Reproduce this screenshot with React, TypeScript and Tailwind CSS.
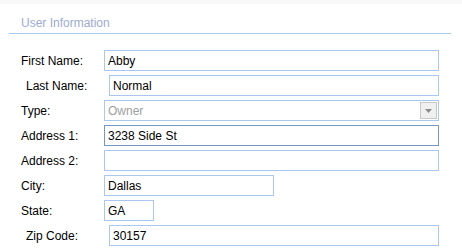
import React from 'react';

// ── Types ──────────────────────────────────────────────────────────────────
interface FieldProps {
  label: string;
  value?: string;
  width: string;      // classe de largeur du champ
  indent?: boolean;   // décalage de 5px (Last Name, Zip Code)
  focused?: boolean;
}

const Field: React.FC<FieldProps> = ({ label, value = '', width, indent = false, focused = false }) => (
  <div className={`flex items-center h-[21px] ${indent ? 'pl-[5px]' : ''}`}>
    <label className="w-[83px] shrink-0 text-[12px] text-black">{label}</label>
    <div
      className={`${width} h-[21px] border ${
        focused ? 'border-[#7597c4]' : 'border-[#aac8ef]'
      } bg-white flex items-center pl-[3px] text-[12px] text-black`}
    >
      {value}
    </div>
  </div>
);

// ── App : formulaire d'informations utilisateur ────────────────────────────
export default function App() {
  return (
    <div
      className="w-[462px] h-[249px] bg-white overflow-hidden"
      style={{ fontFamily: '"Liberation Sans", Arial, sans-serif' }}
    >
      <div className="h-[4px] bg-[#f8f8f8]" />
      <div className="ml-[9px] w-[442px] h-[30px] border-b border-[#a9c8f0] flex items-end pl-[12px] pb-[4px]">
        <span className="text-[12px] text-[#9eabd0] leading-none">User Information</span>
      </div>

      <div className="mt-[16px] pl-[21px] flex flex-col gap-[4px]">
        <Field label="First Name:" value="Abby" width="w-[335px]" />
        <Field label="Last Name:" value="Normal" width="w-[330px]" indent />

        <div className="flex items-center h-[21px]">
          <label className="w-[83px] shrink-0 text-[12px] text-black">Type:</label>
          <div className="w-[335px] h-[21px] border border-[#aac8ef] bg-white flex items-center justify-between pl-[3px] pr-[1px] text-[12px] text-[#a0a0a0]">
            <span>Owner</span>
            <div className="w-[17px] h-[17px] border border-[#c8c8c8] bg-[#f0f0f0] flex items-center justify-center">
              <svg width="7" height="4" viewBox="0 0 7 4">
                <path d="M0 0h7L3.5 4z" fill="#8c8c8c" />
              </svg>
            </div>
          </div>
        </div>

        <Field label="Address 1:" value="3238 Side St" width="w-[335px]" focused />
        <Field label="Address 2:" width="w-[335px]" />
        <Field label="City:" value="Dallas" width="w-[170px]" />
        <Field label="State:" value="GA" width="w-[50px]" />
        <Field label="Zip Code:" value="30157" width="w-[330px]" indent />
      </div>
    </div>
  );
}
